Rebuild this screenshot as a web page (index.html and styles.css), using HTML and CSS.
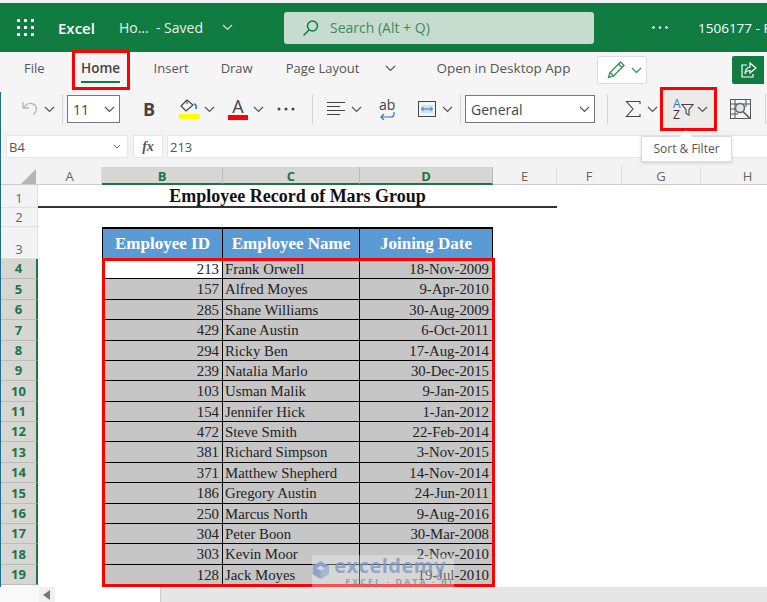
FILE: index.html
```html
<!DOCTYPE html>
<html lang="en">
<head>
    <meta charset="UTF-8">
    <title>Excel</title>
    <link rel="stylesheet" href="styles.css">
</head>
<body>
    <header class="titlebar">
        <svg class="waffle" width="17" height="17" viewBox="0 0 17 17" fill="#fff">
            <rect x="0" y="0" width="3" height="3"/><rect x="7" y="0" width="3" height="3"/><rect x="14" y="0" width="3" height="3"/>
            <rect x="0" y="7" width="3" height="3"/><rect x="7" y="7" width="3" height="3"/><rect x="14" y="7" width="3" height="3"/>
            <rect x="0" y="14" width="3" height="3"/><rect x="7" y="14" width="3" height="3"/><rect x="14" y="14" width="3" height="3"/>
        </svg>
        <span class="appname">Excel</span>
        <span class="docname">Ho... &nbsp;- Saved</span>
        <svg class="docchev" width="11" height="7" viewBox="0 0 11 7"><path d="M1 1l4.5 4.5L10 1" fill="none" stroke="#d5e6dc" stroke-width="1.2"/></svg>
        <div class="search">
            <svg width="18" height="18" viewBox="0 0 18 18" fill="none" stroke="#107c41" stroke-width="1.5"><circle cx="10.5" cy="7" r="5"/><path d="M7 11l-5.500 5.500"/></svg>
            <span>Search (Alt + Q)</span>
        </div>
        <svg class="topdots" width="16" height="3" viewBox="0 0 16 3" fill="#fff"><circle cx="1.5" cy="1.5" r="1.2"/><circle cx="8" cy="1.5" r="1.2"/><circle cx="14.5" cy="1.5" r="1.2"/></svg>
        <span class="user">1506177 - R</span>
    </header>

    <nav class="tabs">
        <span class="tab tab-file">File</span>
        <span class="tab tab-home"><b>Home</b></span>
        <span class="tab tab-insert">Insert</span>
        <span class="tab tab-draw">Draw</span>
        <span class="tab tab-layout">Page Layout</span>
        <svg class="chev tab-chev" width="11" height="7" viewBox="0 0 11 7"><path d="M1 1l4.5 4.5L10 1"/></svg>
        <span class="tab tab-open">Open in Desktop App</span>
        <div class="pencil">
            <svg width="20" height="20" viewBox="0 0 20 20" fill="none" stroke="#2e8b57" stroke-width="1.3"><path d="M2.5 17.5l1.5-5L14.5 2l3.500 3.500L7.500 16z"/><path d="M4 12.500l3.500 3.500M12.500 4l3.500 3.500"/></svg>
            <svg width="11" height="7" viewBox="0 0 11 7"><path d="M1 1l4.500 4.500L10 1" fill="none" stroke="#2e8b57" stroke-width="1.2"/></svg>
        </div>
        <div class="share">
            <svg width="18" height="18" viewBox="0 0 18 18" fill="none" stroke="#fff" stroke-width="1.2"><path d="M10 2l6 5-6 5V9.500C7 9.500 5.500 11 5 13c0-4 2-6.500 5-7z"/><path d="M7 4H2v12h11v-3"/></svg>
        </div>
    </nav>

    <div class="toolbar">
        <svg class="undo" width="18" height="18" viewBox="0 0 18 18" fill="none" stroke="#b5b5b5" stroke-width="1.3"><path d="M2 2v6h6"/><path d="M2 8l3-3c3-2.500 8-2 10 1.500 1.500 3-.5 6-2.500 8"/></svg>
        <svg class="chev undo-chev" width="11" height="7" viewBox="0 0 11 7"><path d="M1 1l4.500 4.500L10 1"/></svg>
        <i class="sep sep-a"></i>
        <div class="select select-size"><span>11</span><svg class="chev" width="11" height="7" viewBox="0 0 11 7"><path d="M1 1l4.500 4.500L10 1"/></svg></div>
        <b class="bold">B</b>
        <div class="colorbtn fill">
            <svg width="20" height="15" viewBox="0 0 20 15" fill="none"><path d="M8 1L2 7l5 5 7-6z" stroke="#444" stroke-width="1.2"/><path d="M8 1v4" stroke="#444"/><path d="M15 5c2 0 2.500 2 2 5" stroke="#2f77c0" stroke-width="1.6"/></svg>
            <i class="swatch swatch-yellow"></i>
        </div>
        <svg class="chev fill-chev" width="11" height="7" viewBox="0 0 11 7"><path d="M1 1l4.500 4.500L10 1"/></svg>
        <div class="colorbtn letter">
            <span>A</span>
            <i class="swatch swatch-red"></i>
        </div>
        <svg class="chev a-chev" width="11" height="7" viewBox="0 0 11 7"><path d="M1 1l4.500 4.500L10 1"/></svg>
        <svg class="dots" width="20" height="4" viewBox="0 0 20 4" fill="#444"><circle cx="2" cy="2" r="1.5"/><circle cx="9" cy="2" r="1.5"/><circle cx="16" cy="2" r="1.5"/></svg>
        <i class="sep sep-b"></i>
        <svg class="align" width="18" height="18" viewBox="0 0 18 18" stroke="#444"><path d="M0 2.500h18M0 6.500h13M0 10.500h18M0 14.500h13"/></svg>
        <svg class="chev align-chev" width="11" height="7" viewBox="0 0 11 7"><path d="M1 1l4.500 4.500L10 1"/></svg>
        <div class="wraptext"><span>ab</span><svg width="16" height="8" viewBox="0 0 16 8" fill="none" stroke="#2f77c0" stroke-width="1.2"><path d="M15 0v2c0 2-1 3-3 3H2M5 2L2 5l3 3"/></svg></div>
        <svg class="merge" width="18" height="18" viewBox="0 0 18 18" fill="none"><rect x="0.500" y="1.500" width="17" height="15" stroke="#444"/><rect x="3" y="5" width="12" height="8" fill="#cfe2f5"/><path d="M3.500 9h11M5.500 7l-2 2 2 2M12.500 7l2 2-2 2" stroke="#2f77c0"/></svg>
        <svg class="chev merge-chev" width="11" height="7" viewBox="0 0 11 7"><path d="M1 1l4.500 4.500L10 1"/></svg>
        <i class="sep sep-c"></i>
        <div class="select select-format"><span>General</span><svg class="chev" width="11" height="7" viewBox="0 0 11 7"><path d="M1 1l4.500 4.500L10 1"/></svg></div>
        <i class="sep sep-d"></i>
        <svg class="sigma" width="16" height="18" viewBox="0 0 16 18" fill="none" stroke="#444" stroke-width="1.1"><path d="M15 4V1.500H1.500L8 9l-6.500 7.500H15V14"/></svg>
        <svg class="chev sigma-chev" width="11" height="7" viewBox="0 0 11 7"><path d="M1 1l4.500 4.500L10 1"/></svg>
        <div class="sortbtn">
            <div class="az"><span class="az-a">A</span><span class="az-z">Z</span></div>
            <svg class="funnel" width="13" height="13" viewBox="0 0 13 13" fill="none" stroke="#444" stroke-width="1.1"><path d="M1 1.500h11L8 6.500V12l-3-1.500v-4z"/></svg>
            <svg class="chev sort-chev" width="11" height="7" viewBox="0 0 11 7"><path d="M1 1l4.500 4.500L10 1"/></svg>
        </div>
        <svg class="analyze" width="22" height="21" viewBox="0 0 22 21" fill="none" stroke="#555"><rect x="0.500" y="0.500" width="20" height="19"/><path d="M0 5h21M0 10h8M0 15h8M5 0v20M16 0v8"/><circle cx="10" cy="9" r="4.500" fill="#dbe7f3" stroke="#666" stroke-width="1.5"/><path d="M13 12.500l7 7" stroke-width="1.6"/></svg>
        <i class="sep sep-e"></i>
    </div>

    <div class="formulabar">
        <div class="namebox"><span>B4</span><svg width="8" height="5" viewBox="0 0 8 5"><path d="M1 1l3 3 3-3" fill="none" stroke="#666"/></svg></div>
        <div class="fxbox">fx</div>
        <div class="formula">213</div>
    </div>

    <main class="sheet">
        <div class="corner"><svg width="15" height="15" viewBox="0 0 15 15"><path d="M15 0v15H0z" fill="#b4b4b4"/></svg></div>
        <div class="colhead">A</div>
        <div class="colhead on">B</div>
        <div class="colhead on">C</div>
        <div class="colhead on">D</div>
        <div class="colhead">E</div>
        <div class="colhead">F</div>
        <div class="colhead">G</div>
        <div class="colhead">H</div>

        <div class="rowhead">1</div>
        <div class="title">Employee Record of Mars Group</div>
        <div class="rowhead">2</div>
        <div class="blank"></div>
        <div class="rowhead">3</div>
        <div class="blank"></div>
        <div class="th th-first">Employee ID</div>
        <div class="th">Employee Name</div>
        <div class="th">Joining Date</div>
        <div class="blank wide"></div>

        <div class="rowhead on">4</div><div class="blank"></div><div class="td num first">213</div><div class="td">Frank Orwell</div><div class="td num">18-Nov-2009</div><div class="blank wide"></div>
        <div class="rowhead on">5</div><div class="blank"></div><div class="td num">157</div><div class="td">Alfred Moyes</div><div class="td num">9-Apr-2010</div><div class="blank wide"></div>
        <div class="rowhead on">6</div><div class="blank"></div><div class="td num">285</div><div class="td">Shane Williams</div><div class="td num">30-Aug-2009</div><div class="blank wide"></div>
        <div class="rowhead on">7</div><div class="blank"></div><div class="td num">429</div><div class="td">Kane Austin</div><div class="td num">6-Oct-2011</div><div class="blank wide"></div>
        <div class="rowhead on">8</div><div class="blank"></div><div class="td num">294</div><div class="td">Ricky Ben</div><div class="td num">17-Aug-2014</div><div class="blank wide"></div>
        <div class="rowhead on">9</div><div class="blank"></div><div class="td num">239</div><div class="td">Natalia Marlo</div><div class="td num">30-Dec-2015</div><div class="blank wide"></div>
        <div class="rowhead on">10</div><div class="blank"></div><div class="td num">103</div><div class="td">Usman Malik</div><div class="td num">9-Jan-2015</div><div class="blank wide"></div>
        <div class="rowhead on">11</div><div class="blank"></div><div class="td num">154</div><div class="td">Jennifer Hick</div><div class="td num">1-Jan-2012</div><div class="blank wide"></div>
        <div class="rowhead on">12</div><div class="blank"></div><div class="td num">472</div><div class="td">Steve Smith</div><div class="td num">22-Feb-2014</div><div class="blank wide"></div>
        <div class="rowhead on">13</div><div class="blank"></div><div class="td num">381</div><div class="td">Richard Simpson</div><div class="td num">3-Nov-2015</div><div class="blank wide"></div>
        <div class="rowhead on">14</div><div class="blank"></div><div class="td num">371</div><div class="td">Matthew Shepherd</div><div class="td num">14-Nov-2014</div><div class="blank wide"></div>
        <div class="rowhead on">15</div><div class="blank"></div><div class="td num">186</div><div class="td">Gregory Austin</div><div class="td num">24-Jun-2011</div><div class="blank wide"></div>
        <div class="rowhead on">16</div><div class="blank"></div><div class="td num">250</div><div class="td">Marcus North</div><div class="td num">9-Aug-2016</div><div class="blank wide"></div>
        <div class="rowhead on">17</div><div class="blank"></div><div class="td num">304</div><div class="td">Peter Boon</div><div class="td num">30-Mar-2008</div><div class="blank wide"></div>
        <div class="rowhead on">18</div><div class="blank"></div><div class="td num">303</div><div class="td">Kevin Moor</div><div class="td num">2-Nov-2010</div><div class="blank wide"></div>
        <div class="rowhead on">19</div><div class="blank"></div><div class="td num">128</div><div class="td">Jack Moyes</div><div class="td num">19-Jul-2010</div><div class="blank wide"></div>

        <div class="redbox"></div>
    </main>

    <footer class="scrollbar">
        <div class="scroll-left"><svg width="8" height="10" viewBox="0 0 8 10"><path d="M7 0v10L0 5z" fill="#777"/></svg></div>
        <div class="scroll-thumb"></div>
    </footer>

    <div class="tooltip">Sort &amp; Filter</div>

    <div class="watermark">
        <svg width="28" height="30" viewBox="0 0 28 30"><path d="M14 1L27 8v14l-13 7L1 22V8z" fill="#8ea4c4"/><path d="M14 15L27 8v14l-13 7z" fill="#a8b8d0"/><path d="M14 8l7 4-7 4-7-4z" fill="#cdd6e4"/></svg>
        <div class="wm-text"><span class="wm-big">exceldemy</span><span class="wm-small">EXCEL &middot; DATA &middot; BI</span></div>
    </div>
</body>
</html>
```
FILE: styles.css
```css
* {
    box-sizing: border-box;
}
body {
    margin: 0;
    width: 767px;
    height: 602px;
    overflow: hidden;
    position: relative;
    background: #f2f2f2;
    color: #444;
    font-family: "Open Sans", "Noto Sans", sans-serif;
    font-size: 13px;
    padding-top: 3px;
}
.titlebar > *, .tabs > *, .toolbar > *, .formulabar > * {
    flex: none;
}

/* top green bar */
.titlebar {
    height: 49px;
    background: #107c41;
    color: #fff;
    display: flex;
    align-items: center;
    white-space: nowrap;
}
.waffle {
    margin-left: 17px;
}
.appname {
    margin-left: 24px;
    font-size: 15px;
    font-weight: 600;
}
.docname {
    margin-left: 24px;
    font-size: 14px;
    color: #e6f1ea;
}
.docchev {
    margin-left: 19px;
}
.search {
    margin-left: 51px;
    width: 310px;
    height: 32px;
    background: #c6dccf;
    border-radius: 3px;
    display: flex;
    align-items: center;
    padding-left: 18px;
    color: #3f8a60;
    font-size: 14px;
}
.search span {
    margin-left: 10px;
}
.topdots {
    margin-left: 58px;
}
.user {
    margin-left: 30px;
    font-size: 13.5px;
}

/* ribbon tabs */
.tabs {
    height: 40px;
    padding-bottom: 8px;
    background: #f5f5f5;
    display: flex;
    align-items: center;
    white-space: nowrap;
}
.tab {
    color: #555;
    font-size: 13px;
}
.tab-file {
    margin-left: 24px;
}
.tab-home {
    margin-left: 27px;
    margin-top: 4px;
    width: 58px;
    height: 40px;
    border: 3px solid #f00;
    display: flex;
    justify-content: center;
    padding-top: 6px;
}
.tab-home b {
    color: #444;
    font-weight: 600;
    font-size: 13.5px;
    height: 24px;
    border-bottom: 2px solid #107c41;
}
.tab-insert {
    margin-left: 24px;
}
.tab-draw {
    margin-left: 32px;
}
.tab-layout {
    margin-left: 33px;
}
.tab-chev {
    margin-left: 26px;
}
.tab-open {
    margin-left: 40px;
    font-size: 13.5px;
}
.pencil {
    margin-left: 27px;
    margin-top: 4px;
    width: 50px;
    height: 28px;
    background: #fff;
    border: 1px solid #ddd;
    border-radius: 2px;
    display: flex;
    align-items: center;
    padding-left: 8px;
    gap: 5px;
}
.share {
    margin-left: 85px;
    margin-top: 4px;
    width: 32px;
    height: 28px;
    background: #107c41;
    border-radius: 2px 0 0 2px;
    display: flex;
    align-items: center;
    padding-left: 8px;
}

/* ribbon commands */
.toolbar {
    height: 38px;
    padding-bottom: 4px;
    background: #f5f5f5;
    display: flex;
    align-items: center;
    white-space: nowrap;
    box-shadow: inset 1px 0 #1f6e8c;
}
.chev {
    fill: none;
    stroke: #555;
    stroke-width: 1.2;
    flex: none;
}
.sep {
    width: 1px;
    height: 30px;
    background: #d4d4d4;
}
.undo {
    margin-left: 21px;
}
.undo-chev {
    margin-left: 5px;
}
.sep-a {
    margin-left: 7px;
}
.select {
    height: 28px;
    background: #fff;
    border: 1px solid #777;
    display: flex;
    align-items: center;
    justify-content: space-between;
    color: #444;
    font-size: 14px;
}
.select-size {
    margin-left: 4px;
    width: 53px;
    padding: 0 4px 0 5px;
}
.bold {
    margin-left: 23px;
    width: 14px;
    font-size: 18px;
    color: #444;
}
.colorbtn {
    display: flex;
    flex-direction: column;
    align-items: center;
}
.fill {
    margin-left: 22px;
    width: 20px;
}
.swatch {
    display: block;
    height: 5px;
    width: 20px;
}
.swatch-yellow {
    background: #ff0;
}
.swatch-red {
    background: #f00;
}
.fill-chev {
    margin-left: 5px;
}
.letter {
    margin-left: 13px;
    width: 20px;
}
.letter span {
    font-size: 18px;
    line-height: 17px;
    height: 17px;
    color: #444;
}
.a-chev {
    margin-left: 5px;
}
.dots {
    margin-left: 13px;
}
.sep-b {
    margin-left: 15px;
}
.align {
    margin-left: 14px;
}
.align-chev {
    margin-left: 6px;
}
.wraptext {
    margin-left: 17px;
    width: 20px;
    height: 24px;
    display: flex;
    flex-direction: column;
    line-height: 15px;
    font-size: 14px;
    color: #444;
}
.merge {
    margin-left: 19px;
}
.merge-chev {
    margin-left: 6px;
}
.sep-c {
    margin-left: 7px;
}
.select-format {
    margin-left: 4px;
    width: 130px;
    padding: 0 4px 0 5px;
}
.sep-d {
    margin-left: 12px;
}
.sigma {
    margin-left: 17px;
}
.sigma-chev {
    margin-left: 6px;
}
.sortbtn {
    margin-left: 2px;
    width: 57px;
    height: 44px;
    background: #edebe9;
    border: 3px solid #f00;
    display: flex;
    align-items: center;
    padding-left: 10px;
}
.az {
    display: flex;
    flex-direction: column;
    line-height: 11px;
    font-size: 12px;
    width: 8px;
}
.az-a {
    color: #2f77c0;
}
.az-z {
    color: #333;
}
.funnel {
    margin-top: 1px;
}
.sort-chev {
    margin-left: 3px;
}
.analyze {
    margin-left: 13px;
}
.sep-e {
    margin-left: 13px;
}

/* formula bar */
.formulabar {
    height: 37px;
    background: #f3f3f3;
    display: flex;
    align-items: flex-start;
    padding: 5px 0 0 6px;
    box-shadow: inset 1px 0 #1f6e8c;
}
.namebox, .fxbox, .formula {
    height: 23px;
    background: #fff;
    border: 1px solid #e6e6e6;
    display: flex;
    align-items: center;
    color: #555;
}
.namebox {
    width: 122px;
    padding: 0 6px 0 2px;
    justify-content: space-between;
}
.fxbox {
    margin-left: 5px;
    width: 30px;
    justify-content: center;
    font-family: "Liberation Serif", serif;
    font-style: italic;
    font-weight: 700;
    font-size: 14px;
}
.formula {
    margin-left: 4px;
    flex: 1;
    padding-left: 2px;
    border-right: 0;
}

/* worksheet */
.sheet {
    position: relative;
    height: 420px;
    background: #fff;
    display: grid;
    grid-template-columns: 37px 64px 121px 137px 133px 64px 65px 79px 94px;
    grid-template-rows: 18px 23px 19px 32px repeat(16, 20.38px);
    border-left: 1px solid #1f6e8c;
    overflow: hidden;
}
.corner {
    background: #f3f3f3;
    display: flex;
    justify-content: flex-end;
    padding: 2px 2px 0 0;
    border-bottom: 1px solid #ccc;
}
.colhead {
    background: #f3f3f3;
    border-right: 1px solid #ddd;
    border-bottom: 1px solid #ccc;
    text-align: center;
    line-height: 18px;
    font-size: 13px;
    color: #666;
}
.colhead.on {
    background: #d6d6d3;
    border-right-color: #bbb;
    border-bottom: 2px solid #217346;
    color: #217346;
    font-weight: 700;
}
.rowhead {
    grid-column: 1;
    background: #f3f3f3;
    border-bottom: 1px solid #e0e0e0;
    border-right: 1px solid #e0e0e0;
    display: flex;
    align-items: flex-end;
    justify-content: center;
    font-size: 13px;
    color: #666;
    line-height: 17px;
}
.rowhead.on {
    background: #d6d6d3;
    border-bottom-color: #bbb;
    border-right: 2px solid #217346;
    color: #217346;
    font-weight: 700;
    line-height: 19px;
}
.title {
    grid-column: 2 / span 5;
    border-bottom: 2px solid #333;
    text-align: center;
    font: 700 18px/23px "Liberation Serif", serif;
    color: #111;
}
.blank {
    grid-column: 2;
}
.blank.wide {
    grid-column: 6 / -1;
}
.th, .td {
    font-family: "Liberation Serif", serif;
    border-right: 1px solid #000;
    border-bottom: 1px solid #000;
    white-space: nowrap;
    overflow: hidden;
}
.th {
    background: #5b9bd5;
    color: #fff;
    font-weight: 700;
    font-size: 17px;
    text-align: center;
    line-height: 29px;
    border-top: 2px solid #000;
    border-bottom: 0;
}
.th-first {
    border-left: 1px solid #000;
}
.td {
    background: #c6c6c6;
    color: #222;
    font-size: 14.8px;
    line-height: 20px;
    padding-left: 2px;
}
.td.num {
    text-align: right;
    padding-right: 3px;
}
.td.first {
    background: #fff;
}
/* the red selection outline lies over the table */
.redbox {
    position: absolute;
    left: 101px;
    top: 91px;
    width: 393px;
    height: 329px;
    border: 3px solid #f00;
}

.scrollbar {
    position: absolute;
    left: 0;
    right: 0;
    bottom: 0;
    height: 15px;
    background: #e6e6e6;
    display: flex;
    padding-left: 39px;
}
.scrollbar::before {
    content: "";
    position: absolute;
    left: 0;
    top: 0;
    width: 39px;
    height: 15px;
    background: #fafafa;
}
.scroll-left {
    width: 16px;
    background: #f0f0f0;
    display: flex;
    align-items: center;
    justify-content: center;
}
.scroll-thumb {
    width: 106px;
    background: #fff;
    border-right: 1px solid #ccc;
}

.tooltip {
    position: absolute;
    left: 641px;
    top: 136px;
    width: 91px;
    height: 26px;
    background: #fff;
    border: 1px solid #ddd;
    box-shadow: 0 1px 3px rgba(0,0,0,.15);
    font-size: 12px;
    line-height: 24px;
    text-align: center;
    color: #555;
}
.tooltip::before {
    content: "";
    position: absolute;
    left: 40px;
    top: -5px;
    width: 8px;
    height: 8px;
    background: #fff;
    transform: rotate(45deg);
}

.watermark {
    position: absolute;
    left: 312px;
    top: 555px;
    width: 142px;
    height: 32px;
    background: rgba(255,255,255,.3);
    display: flex;
    gap: 5px;
    overflow: hidden;
}
.wm-text {
    display: flex;
    flex-direction: column;
    white-space: nowrap;
}
.wm-big {
    font: 700 20px/22px "Open Sans", sans-serif;
    color: rgba(120,150,195,.75);
    letter-spacing: .5px;
}
.wm-small {
    font: 700 9px/10px "Open Sans", sans-serif;
    color: rgba(130,130,130,.7);
    letter-spacing: 2px;
    padding-left: 11px;
}
```
